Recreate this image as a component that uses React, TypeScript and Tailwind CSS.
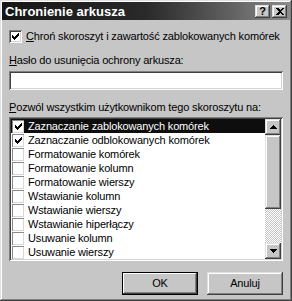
const items = [
  { label: 'Zaznaczanie zablokowanych komórek', checked: true },
  { label: 'Zaznaczanie odblokowanych komórek', checked: true },
  { label: 'Formatowanie komórek', checked: false },
  { label: 'Formatowanie kolumn', checked: false },
  { label: 'Formatowanie wierszy', checked: false },
  { label: 'Wstawianie kolumn', checked: false },
  { label: 'Wstawianie wierszy', checked: false },
  { label: 'Wstawianie hiperłączy', checked: false },
  { label: 'Usuwanie kolumn', checked: false },
  { label: 'Usuwanie wierszy', checked: false },
];

// classic 7x7 pixel check mark
function CheckMark() {
  const cols = [2, 3, 4, 3, 2, 1, 0];
  return (
    <svg width="7" height="7" viewBox="0 0 7 7" shapeRendering="crispEdges">
      {cols.map((y, x) => (
        <rect key={x} x={x} y={y} width="1" height="3" fill="#000" />
      ))}
    </svg>
  );
}

function CheckBox({ checked }: { checked: boolean }) {
  return (
    <span className="w-[13px] h-[13px] shrink-0 bg-white flex items-center justify-center shadow-[inset_1px_1px_#808080,inset_-1px_-1px_#fff,inset_2px_2px_#404040,inset_-2px_-2px_#d4d4d4]">
      {checked && <CheckMark />}
    </span>
  );
}

function ListBox({ checked }: { checked: boolean }) {
  return (
    <span className="w-[12px] h-[13px] shrink-0 bg-white flex items-center justify-center shadow-[inset_1px_1px_#8a8a8a,inset_-1px_-1px_#d8d8d8]">
      {checked && <CheckMark />}
    </span>
  );
}

function Arrow({ up }: { up: boolean }) {
  return (
    <svg width="7" height="4" viewBox="0 0 7 4" shapeRendering="crispEdges">
      {up ? (
        <path d="M3 0h1v1h1v1h1v1h1v1H0V3h1V2h1V1h1z" fill="#000" />
      ) : (
        <path d="M0 0h7v1H6v1H5v1H4v1H3V3H2V2H1V1H0z" fill="#000" />
      )}
    </svg>
  );
}

const raised =
  'bg-[#c6c6c6] shadow-[inset_-1px_-1px_#404040,inset_1px_1px_#e0e0e0,inset_-2px_-2px_#808080,inset_2px_2px_#fff]';

export default function App() {
  return (
    <div className="w-[292px] h-[301px] bg-[#c6c6c6] p-[2px] font-['Liberation_Sans',Arial,sans-serif] text-[11px] tracking-[-0.15px] text-black shadow-[inset_-1px_-1px_#404040,inset_1px_1px_#e0e0e0,inset_-2px_-2px_#808080,inset_2px_2px_#fff] overflow-hidden whitespace-nowrap">
      {/* title bar */}
      <div className="h-[18px] flex items-center justify-between pl-[3px] pr-[3px] bg-gradient-to-r from-[#161616] via-[#2a2a2a] to-[#8c8c8c]">
        <span className="text-white font-bold text-[13px] tracking-normal leading-none">Chronienie arkusza</span>
        <div className="flex gap-[2px]">
          <span className={`w-[15px] h-[13px] flex items-center justify-center font-bold text-[11px] leading-none ${raised}`}>?</span>
          <span className={`w-[15px] h-[13px] flex items-center justify-center ${raised}`}>
            <svg width="8" height="7" viewBox="0 0 8 7" shapeRendering="crispEdges">
              <path d="M0 0h2l2 2 2-2h2L5 3.5 8 7H6L4 5 2 7H0l3-3.5z" fill="#000" />
            </svg>
          </span>
        </div>
      </div>

      <div className="px-[7px]">
        <label className="flex items-center gap-[4px] mt-[10px] h-[13px]">
          <CheckBox checked />
          <span>
            <span className="underline">C</span>hroń skoroszyt i zawartość zablokowanych komórek
          </span>
        </label>

        <div className="mt-[11px] leading-[13px]">
          <span className="underline">H</span>asło do usunięcia ochrony arkusza:
        </div>
        <div className="mt-[4px] h-[19px] bg-white shadow-[inset_1px_1px_#808080,inset_-1px_-1px_#fff,inset_2px_2px_#404040,inset_-2px_-2px_#d4d4d4]" />

        <div className="mt-[11px] leading-[13px]">
          <span className="underline">P</span>ozwól wszystkim użytkownikom tego skoroszytu na:
        </div>

        <div className="mt-[3px] h-[144px] bg-white p-[2px] flex shadow-[inset_1px_1px_#808080,inset_-1px_-1px_#fff,inset_2px_2px_#404040,inset_-2px_-2px_#d4d4d4]">
          <div className="flex-1 flex flex-col">
            {items.map((it, i) => (
              <div
                key={it.label}
                className={`h-[14px] flex items-center gap-[4px] pl-[1px] ${i === 0 ? 'bg-[#0e0e0e] text-white' : ''}`}
              >
                <ListBox checked={it.checked} />
                <span className="leading-none">{it.label}</span>
              </div>
            ))}
          </div>
          {/* scrollbar */}
          <div className="w-[16px] flex flex-col bg-[repeating-conic-gradient(#c6c6c6_0_25%,#fff_0_50%)] bg-[length:2px_2px]">
            <div className={`h-[16px] flex items-center justify-center ${raised}`}>
              <Arrow up />
            </div>
            <div className={`h-[74px] ${raised}`} />
            <div className="flex-1" />
            <div className={`h-[16px] flex items-center justify-center ${raised}`}>
              <Arrow up={false} />
            </div>
          </div>
        </div>

        <div className="mt-[11px] flex justify-end gap-[9px]">
          <button className="w-[76px] h-[23px] border border-black bg-[#c6c6c6] shadow-[inset_-1px_-1px_#404040,inset_1px_1px_#fff,inset_-2px_-2px_#808080] text-[11px]">
            OK
          </button>
          <button className={`w-[76px] h-[23px] text-[11px] ${raised}`}>Anuluj</button>
        </div>
      </div>
    </div>
  );
}
